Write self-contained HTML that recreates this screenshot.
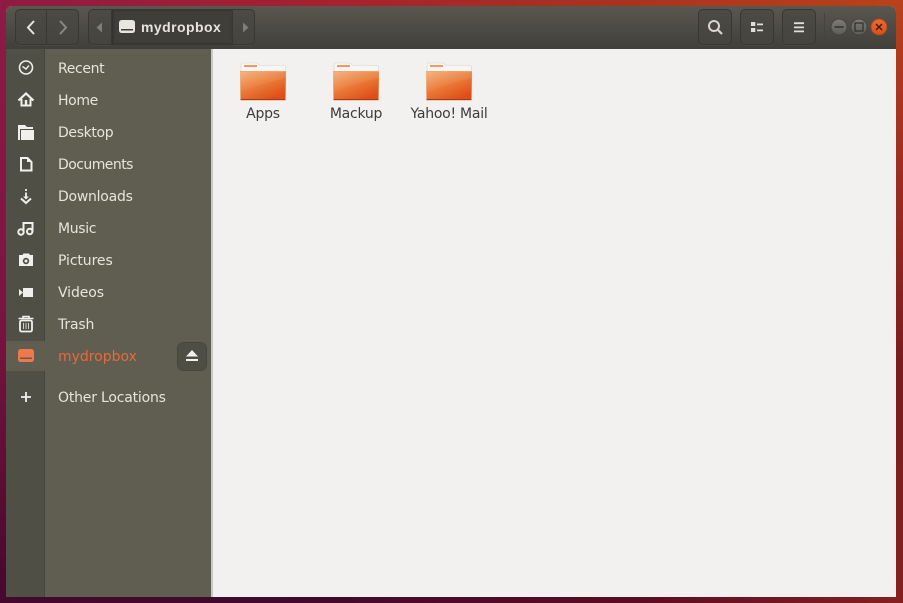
<!DOCTYPE html>
<html><head><meta charset="utf-8"><style>
*{box-sizing:border-box}
html,body{margin:0;padding:0}
body{width:903px;height:603px;overflow:hidden;position:relative;font-family:"DejaVu Sans","Liberation Sans",sans-serif;background:#300a24}
.abs{position:absolute}
.bg{left:0;top:0;width:903px;height:603px}
.win{left:6px;top:6px;width:890px;height:591px;overflow:hidden;border-radius:6px 6px 0 0;background:#f2f1f0}
.hdr{left:0;top:0;width:890px;height:43px;background:linear-gradient(#59574f,#403f3a);}
.btn{position:absolute;top:3px;height:36px;border:1px solid #383732;border-radius:5px;background:linear-gradient(#4c4a44,#45443e);box-shadow:0 1px 0 rgba(255,255,255,.04)}
.strip{left:0;top:43px;width:39px;height:548px;background:#4f4f46;border-right:1px solid #46463e}
.side{left:39px;top:43px;width:166px;height:548px;background:#5f5e51}
.sb{left:205px;top:43px;width:2px;height:548px;background:#c9c8c5}
.t{position:absolute;left:52px;color:#e6e4dc;font-size:14px;line-height:18px;white-space:nowrap;letter-spacing:-.35px}
.sel{left:0;top:335px;width:39px;height:30px;background:#5f5e51}
.lab{position:absolute;color:#3d3c38;font-size:14px;line-height:18px;text-align:center;width:100px;letter-spacing:-.25px;white-space:nowrap}
svg{position:absolute;overflow:visible}
</style></head><body>
<svg class="abs bg" style="left:0;top:0" width="903" height="603">
<defs>
<linearGradient id="top" x1="0" x2="1" y1="0" y2="0"><stop offset="0" stop-color="#8e1b44"/><stop offset=".35" stop-color="#a3222f"/><stop offset=".7" stop-color="#a9341e"/><stop offset="1" stop-color="#b8421a"/></linearGradient>
<linearGradient id="bot" x1="0" x2="1" y1="0" y2="0"><stop offset="0" stop-color="#45082e"/><stop offset=".3" stop-color="#3f0a2c"/><stop offset=".7" stop-color="#5a0c24"/><stop offset="1" stop-color="#842020"/></linearGradient>
<linearGradient id="l" x1="0" x2="0" y1="0" y2="1"><stop offset="0" stop-color="#8e1b44"/><stop offset=".5" stop-color="#7c1440"/><stop offset="1" stop-color="#45082e"/></linearGradient>
<linearGradient id="r" x1="0" x2="0" y1="0" y2="1"><stop offset="0" stop-color="#b8421a"/><stop offset=".25" stop-color="#a03020"/><stop offset=".6" stop-color="#7c1c20"/><stop offset="1" stop-color="#842020"/></linearGradient>
<linearGradient id="fb" x1="0" y1="0" x2=".65" y2="1"><stop offset="0" stop-color="#f2ae78"/><stop offset=".45" stop-color="#ec8340"/><stop offset="1" stop-color="#df4f17"/></linearGradient>
<linearGradient id="fh" x1="0" y1="0" x2="0" y2="1"><stop offset="0" stop-color="#ffffff" stop-opacity=".1"/><stop offset="1" stop-color="#ffffff" stop-opacity=".02"/></linearGradient>
<linearGradient id="g1" x1="0" x2="0" y1="0" y2="1"><stop offset="0" stop-color="#7c7b75"/><stop offset="1" stop-color="#5d5c56"/></linearGradient>
<linearGradient id="g2" x1="0" x2="0" y1="0" y2="1"><stop offset="0" stop-color="#ee6a35"/><stop offset="1" stop-color="#d94e1c"/></linearGradient>
<symbol id="folder" viewBox="0 0 46 38" overflow="visible">
<path d="M1 3Q1 0 3 0H17L20 2.500H44Q45.500 2.500 45.500 4V12H1Z" fill="#f7f6f3" stroke="#d8d5cf" stroke-width=".6"/>
<rect x="4" y="2" width="13" height="2" fill="#ef9a66"/>
<path d="M0 9Q0 8 1 8H45Q46 8 46 9L45.500 36Q45.500 37 44.500 37H1.500Q.5 37 .5 36Z" fill="url(#fb)"/>
<path d="M0 8H46V15Q24 20 .2 29Z" fill="url(#fh)"/>
<rect x="0" y="8" width="46" height=".7" fill="#f2a574"/>
<rect x=".5" y="36" width="45" height="1.200" fill="#ad3a0e"/>
</symbol>
</defs>
<rect width="903" height="8" fill="url(#top)"/>
<rect y="595" width="903" height="8" fill="url(#bot)"/>
<rect width="7" height="603" fill="url(#l)"/>
<rect x="895" width="8" height="603" fill="url(#r)"/>
</svg>

<div class="abs win">
<div class="abs hdr"></div>
<div class="abs strip"></div>
<div class="abs side"></div>
<div class="abs sb"></div>
<div class="abs sel"></div>

<div class="btn" style="left:9px;width:32px;border-radius:5px 0 0 5px;"></div>
<div class="btn" style="left:40px;width:33px;border-radius:0 5px 5px 0;"></div>
<div class="btn" style="left:82px;width:24px;border-radius:5px 0 0 5px;"></div>
<div class="btn" style="left:105px;width:122px;border-radius:0;background:#3f3e39;box-shadow:inset 1px 0 2px #2e2d29"></div>
<div class="btn" style="left:226px;width:23px;border-radius:0 5px 5px 0;"></div>
<div class="btn" style="left:692px;width:34px"></div>
<div class="btn" style="left:734px;width:34px"></div>
<div class="btn" style="left:776px;width:34px"></div>
<div class="abs" style="left:135px;top:12px;font-size:14px;font-weight:bold;line-height:18px;color:#e6e4dc;font-family:'Liberation Sans',sans-serif;letter-spacing:.45px">mydropbox</div>

<div class="abs" style="left:818px;top:7px;width:1px;height:30px;background:#45443f"></div>

<div class="t" style="top:54px;">Recent</div>
<div class="t" style="top:86px;">Home</div>
<div class="t" style="top:118px;">Desktop</div>
<div class="t" style="top:150px;letter-spacing:-.55px">Documents</div>
<div class="t" style="top:182px;letter-spacing:-.25px">Downloads</div>
<div class="t" style="top:214px;">Music</div>
<div class="t" style="top:246px;letter-spacing:-.1px">Pictures</div>
<div class="t" style="top:278px;letter-spacing:-.1px">Videos</div>
<div class="t" style="top:310px;letter-spacing:-.15px">Trash</div>
<div class="t" style="top:342px;color:#e9683c;letter-spacing:-.02px">mydropbox</div>
<div class="t" style="top:383px;letter-spacing:-.2px">Other Locations</div>
</div>

<svg class="abs" style="left:0;top:0" width="903" height="603" fill="none">
<!-- nav -->
<path d="M34 21L28 27.500L34 34" stroke="#e8e6df" stroke-width="2"/>
<path d="M60 21L66 27.500L60 34" stroke="#8a8981" stroke-width="2"/>
<path d="M102 22.500V32.500L96.500 27.500Z" fill="#807f77"/>
<path d="M243 22.500V32.500L248.500 27.500Z" fill="#807f77"/>
<!-- path drive icon -->
<path d="M122 20H132Q135 20 135 23V30Q135 33 132 33H122Q119 33 119 30V23Q119 20 122 20Z" fill="#e8e6df"/>
<rect x="121" y="29" width="12" height="1.500" fill="#3f3e39"/>
<!-- search -->
<circle cx="714" cy="26" r="5" stroke="#d8d6cf" stroke-width="2"/>
<path d="M717.500 29.500L722 34" stroke="#d8d6cf" stroke-width="2.200"/>
<!-- list -->
<path d="M751 22h4.300v4h-4.300zM751 28h4.300v4h-4.300zM757 23.500h6v1.700h-6zM757 29.500h6v1.700h-6z" fill="#e0ded7"/>
<!-- menu -->
<path d="M794 22.300h10v1.800h-10zM794 26.500h10v1.800h-10zM794 30.500h10v1.800h-10z" fill="#e0ded7"/>
<!-- wm -->
<circle cx="839" cy="27" r="8" fill="url(#g1)" stroke="#45443f"/>
<path d="M834.500 27h9" stroke="#2e2d29" stroke-width="1.400"/>
<circle cx="859" cy="27" r="8" fill="url(#g1)" stroke="#45443f"/>
<rect x="855" y="23" width="8" height="8" stroke="#2e2d29" stroke-width="1.200"/>
<circle cx="879" cy="27" r="8" fill="url(#g2)" stroke="#a8461f"/>
<path d="M876 24l6 6M882 24l-6 6" stroke="#3a1c0c" stroke-width="1.400"/>

<!-- recent -->
<circle cx="26" cy="67.500" r="6.500" stroke="#f0eee8" stroke-width="1.600"/>
<path d="M22.500 66.500L26 69L29 65.500" stroke="#f0eee8" stroke-width="1.400"/>
<!-- home -->
<path d="M18.500 100.500L26 93.500L33.500 100.500" stroke="#f2f0ea" stroke-width="2.200"/>
<path d="M21.500 99V105.500H30.500V99" stroke="#f2f0ea" stroke-width="2"/>
<rect x="24.800" y="100" width="2.400" height="5" fill="#f2f0ea"/>
<!-- desktop folder -->
<path d="M18 125H25L27 127H33V129H20V140H18Z" fill="#f2f0ea"/>
<path d="M21 130H34V140H21Z" fill="#f2f0ea"/>
<!-- document -->
<path d="M21 158H27.500L31.500 162V170.500H21Z" stroke="#f2f0ea" stroke-width="2"/>
<path d="M27 157L32 162H27Z" fill="#f2f0ea"/>
<!-- download -->
<path d="M26 189v2M26 192.500v5" stroke="#f2f0ea" stroke-width="1.800"/>
<path d="M21 198.500L26 203L31 198.500" stroke="#f2f0ea" stroke-width="2"/>
<path d="M23 196.500L26 199.500L29 196.500Z" fill="#f2f0ea"/>
<!-- music -->
<circle cx="21" cy="232" r="2.700" stroke="#f2f0ea" stroke-width="2"/>
<circle cx="29.700" cy="231.500" r="2.700" stroke="#f2f0ea" stroke-width="2"/>
<path d="M23.500 232V223H32.500V231.500" stroke="#f2f0ea" stroke-width="2"/>
<!-- camera -->
<path d="M19 255H22.500L23.500 253.500H29L30 255H33V266H19Z" fill="#f2f0ea"/>
<circle cx="26" cy="261" r="3.200" fill="#4f4f46"/>
<circle cx="26" cy="261" r="1.500" fill="#f2f0ea"/>
<!-- video -->
<rect x="23" y="288" width="10" height="9" fill="#f2f0ea"/>
<path d="M19 289L23 292.500L19 296Z" fill="#f2f0ea"/>
<!-- trash -->
<path d="M18.500 318.500H33.500M23 318V316.500H29V318" stroke="#f2f0ea" stroke-width="1.600"/>
<rect x="20" y="320.500" width="12" height="11" rx="1.500" stroke="#f2f0ea" stroke-width="1.800"/>
<path d="M23.500 323V329M26 323V329M28.500 323V329" stroke="#f2f0ea" stroke-width=".8"/>
<!-- drive -->
<path d="M21 349H31Q34 349 34 352V359Q34 362 31 362H21Q18 362 18 359V352Q18 349 21 349Z" fill="#f0784a"/>
<rect x="20" y="357.500" width="12" height="1.500" fill="#5f5e51"/>
<!-- plus -->
<path d="M21 397H31M26 392V402" stroke="#f2f0ea" stroke-width="1.800"/>
<!-- eject -->
<rect x="177.500" y="342.500" width="29" height="28" rx="6" fill="#4f4e45" stroke="#47463e"/>
<path d="M192 350L198 356.500H186Z" fill="#f2f0ea"/>
<rect x="186" y="359" width="12" height="2" fill="#f2f0ea"/>

<!-- folders -->
<use href="#folder" x="240" y="63" width="46" height="38"/>
<use href="#folder" x="333" y="63" width="46" height="38"/>
<use href="#folder" x="426" y="63" width="46" height="38"/>
</svg>
<div class="lab" style="left:213px;top:105px">Apps</div>
<div class="lab" style="left:306px;top:105px">Mackup</div>
<div class="lab" style="left:399px;top:105px">Yahoo! Mail</div>
</body></html>
